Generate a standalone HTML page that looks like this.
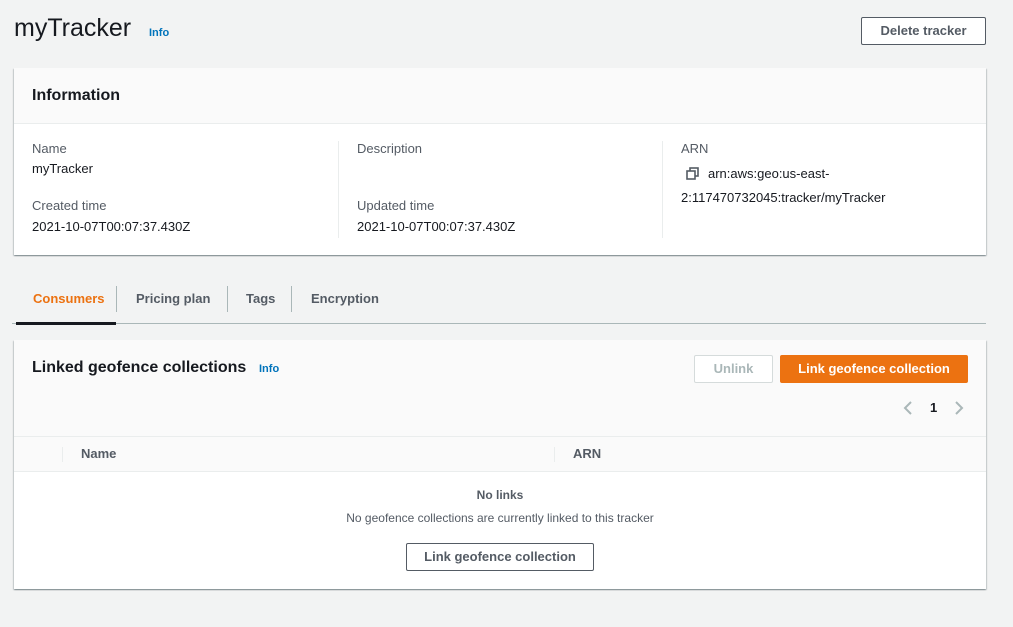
<!DOCTYPE html>
<html><head><style>
*{margin:0;padding:0;box-sizing:border-box}
body{width:1013px;height:627px;background:#f2f3f3;font-family:"Liberation Sans",sans-serif;color:#16191f;position:relative;overflow:hidden;font-size:13px}
.a{position:absolute;white-space:nowrap}
.card{position:absolute;background:#fff;box-shadow:0 1px 1px rgba(0,28,36,.3),1px 1px 1px rgba(0,28,36,.15),-1px 1px 1px rgba(0,28,36,.15)}
.lbl{color:#545b64}
.btn{position:absolute;border:1px solid #545b64;background:#fff;font-weight:bold;color:#545b64;text-align:center;font-size:13px;border-radius:2px}
.info{color:#0073bb;font-weight:bold;font-size:11px}
.vl{position:absolute;width:1px;background:#eaeded}
</style></head><body>
<div class="a" style="left:14px;top:14px;font-size:25px">myTracker</div>
<div class="a info" style="left:149px;top:27px">Info</div>
<div class="btn" style="left:861px;top:17px;width:125px;height:28px;line-height:26px;color:#545b64">Delete tracker</div>

<div class="card" style="left:14px;top:68px;width:972px;height:187px">
 <div style="height:56px;background:#fafafa;border-bottom:1px solid #eaeded"></div>
 <div class="a" style="left:18px;top:19px;font-size:16px;font-weight:bold">Information</div>
 <div class="a lbl" style="left:18px;top:73px">Name</div>
 <div class="a" style="left:18px;top:93px">myTracker</div>
 <div class="a lbl" style="left:18px;top:130px">Created time</div>
 <div class="a" style="left:18px;top:151px">2021-10-07T00:07:37.430Z</div>
 <div class="vl" style="left:324px;top:73px;height:97px"></div>
 <div class="a lbl" style="left:343px;top:73px">Description</div>
 <div class="a lbl" style="left:343px;top:130px">Updated time</div>
 <div class="a" style="left:343px;top:151px">2021-10-07T00:07:37.430Z</div>
 <div class="vl" style="left:648px;top:73px;height:97px"></div>
 <div class="a lbl" style="left:667px;top:73px">ARN</div>
 <svg class="a" style="left:672px;top:99px" width="13" height="13" viewBox="0 0 13 13"><rect x="4" y="1" width="8" height="8" fill="none" stroke="#545b64" stroke-width="1.6"/><rect x="1" y="4" width="8" height="8" fill="#fff" stroke="#545b64" stroke-width="1.6"/></svg>
 <div class="a" style="left:694px;top:98px">arn:aws:geo:us-east-</div>
 <div class="a" style="left:667px;top:122px">2:117470732045:tracker/myTracker</div>
</div>

<div class="a" style="left:33px;top:291px;font-weight:bold;color:#ec7211">Consumers</div>
<div class="vl" style="left:116px;top:286px;height:26px;background:#aab7b8"></div>
<div class="a" style="left:136px;top:291px;font-weight:bold;color:#545b64">Pricing plan</div>
<div class="vl" style="left:227px;top:286px;height:26px;background:#aab7b8"></div>
<div class="a" style="left:246px;top:291px;font-weight:bold;color:#545b64">Tags</div>
<div class="vl" style="left:291px;top:286px;height:26px;background:#aab7b8"></div>
<div class="a" style="left:311px;top:291px;font-weight:bold;color:#545b64">Encryption</div>
<div class="a" style="left:12px;top:323px;width:974px;height:1px;background:#aab7b8"></div>
<div class="a" style="left:16px;top:322px;width:100px;height:3px;background:#16191f"></div>

<div class="card" style="left:14px;top:340px;width:972px;height:249px">
 <div style="height:97px;background:#fafafa;border-bottom:1px solid #eaeded"></div>
 <div style="height:35px;background:#fafafa;border-bottom:1px solid #eaeded"></div>
 <div class="a" style="left:18px;top:19px;font-size:16px;font-weight:bold">Linked geofence collections</div>
 <div class="a info" style="left:245px;top:23px">Info</div>
 <div class="btn" style="left:680px;top:15px;width:79px;height:28px;line-height:26px;border-color:#d5dbdb;color:#aab7b8">Unlink</div>
 <div class="btn" style="left:766px;top:15px;width:188px;height:28px;line-height:26px;background:#ec7211;border-color:#ec7211;color:#fff">Link geofence collection</div>
 <svg class="a" style="left:888px;top:60px" width="12" height="16"><path d="M9 2 L3 8 L9 14" fill="none" stroke="#aab7b8" stroke-width="2"/></svg>
 <div class="a" style="left:916px;top:60px;font-weight:bold">1</div>
 <svg class="a" style="left:939px;top:60px" width="12" height="16"><path d="M3 2 L9 8 L3 14" fill="none" stroke="#aab7b8" stroke-width="2"/></svg>
 <div class="vl" style="left:48px;top:107px;height:15px"></div>
 <div class="a" style="left:67px;top:106px;font-weight:bold;color:#545b64">Name</div>
 <div class="vl" style="left:540px;top:107px;height:15px"></div>
 <div class="a" style="left:559px;top:106px;font-weight:bold;color:#545b64">ARN</div>
 <div class="a" style="left:0;width:972px;text-align:center;top:148px;font-weight:bold;color:#545b64;font-size:12px">No links</div>
 <div class="a" style="left:0;width:972px;text-align:center;top:171px;color:#545b64;font-size:12px">No geofence collections are currently linked to this tracker</div>
 <div class="btn" style="left:392px;top:203px;width:188px;height:28px;line-height:26px">Link geofence collection</div>
</div>
</body></html>
